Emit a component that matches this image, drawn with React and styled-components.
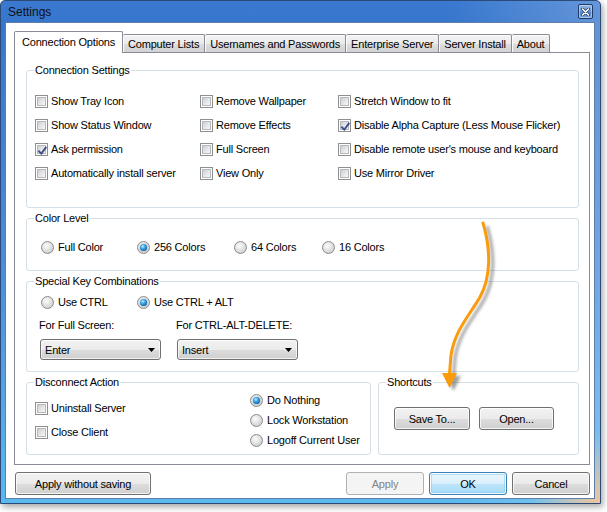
import React from 'react';
import styled, { createGlobalStyle, css } from 'styled-components';

const GlobalStyle = createGlobalStyle`
  html, body {
    margin: 0;
    padding: 0;
    background: #fff;
  }
  body {
    font-family: "Liberation Sans", Arial, sans-serif;
    font-size: 11px;
    letter-spacing: -0.2px;
    color: #000;
  }
`;

const Page = styled.div`
  position: relative;
  width: 607px;
  height: 512px;
  overflow: hidden;
`;

const Window = styled.div`
  box-sizing: border-box;
  width: 601px;
  height: 504px;
  display: flex;
  flex-direction: column;
  border: 1px solid #2b4a78;
  border-radius: 5px 5px 0 0;
  padding: 0 5px 4px 4px;
  background:
    radial-gradient(circle at 100% 100%, rgba(247, 196, 150, 0.95) 0, rgba(247, 196, 150, 0) 70px),
    linear-gradient(90deg, rgba(255, 255, 255, 0) 75%, rgba(255, 255, 255, 0.22) 100%),
    linear-gradient(180deg, #3a79cf 0, #3676cc 22px, #4a8fda 55%, #5ab9ee 100%);
  box-shadow: 2px 3px 6px rgba(0, 0, 0, 0.35);
`;

const TitleBar = styled.div`
  height: 21px;
  display: flex;
  align-items: center;
  justify-content: space-between;
  padding: 0 2px 0 3px;
`;

const Title = styled.span`
  font-size: 12px;
  letter-spacing: 0;
  color: #111;
`;

const CloseButton = styled.div`
  box-sizing: border-box;
  width: 15px;
  height: 15px;
  display: flex;
  align-items: center;
  justify-content: center;
  border: 1px solid #1d3a66;
  border-radius: 2px;
  background: linear-gradient(180deg, #93b6e4 0%, #6893d2 50%, #4f80c7 51%, #76a4de 100%);
  box-shadow: inset 0 0 0 1px rgba(255, 255, 255, 0.4);
`;

const Client = styled.div`
  box-sizing: border-box;
  width: 590px;
  flex: 1;
  display: flex;
  flex-direction: column;
  border: 1px solid #5f7fa9;
  background: #fff;
  padding: 8px 4px 3px 8px;
`;

const TabStrip = styled.div`
  height: 21px;
  display: flex;
  align-items: flex-end;
  position: relative;
  z-index: 1;
`;

const Tab = styled.div`
  box-sizing: border-box;
  display: flex;
  align-items: center;
  height: 18px;
  padding: 0 5px;
  border: 1px solid #898c95;
  border-bottom: none;
  border-left-width: 0;
  border-radius: 2px 2px 0 0;
  background: linear-gradient(180deg, #f3f3f3 0%, #ebebeb 50%, #dedede 51%, #d2d2d2 100%);
  box-shadow: inset 1px 1px 0 rgba(255, 255, 255, 0.85);
  white-space: nowrap;

  ${(p) =>
    p.$active &&
    css`
      height: 22px;
      margin-bottom: -1px;
      padding: 0 7px 2px;
      border-left-width: 1px;
      background: #fff;
      box-shadow: none;
    `}
`;

const TabPanel = styled.div`
  box-sizing: border-box;
  height: 413px;
  display: flex;
  flex-direction: column;
  gap: 4px;
  border: 1px solid #898c95;
  background: #fff;
  padding: 11px 10px 0 11px;
`;

const GroupBox = styled.fieldset`
  margin: 0;
  min-width: 0;
  border: 1px solid #d5dfe5;
  border-radius: 3px;
  padding: ${(p) => p.$pad || '0 7px'};
`;

const Legend = styled.legend`
  padding: 0 1px;
  line-height: 13px;
  font-size: 11px;
`;

const CheckGrid = styled.div`
  display: grid;
  grid-template-columns: 165px 138px 1fr;
  grid-auto-rows: 24px;
  padding-left: 1px;
`;

const Item = styled.label`
  display: flex;
  align-items: center;
  gap: ${(p) => (p.$radio ? '4px' : '3px')};
  height: ${(p) => (p.$h ? `${p.$h}px` : 'auto')};
  white-space: nowrap;
`;

const Box = styled.span`
  position: relative;
  box-sizing: border-box;
  flex: none;
  width: 13px;
  height: 13px;
  border: 1px solid #8e8f8f;
  background: #fff;

  &::before {
    content: '';
    position: absolute;
    inset: 1px;
    border: 1px solid #b6b9bd;
    background: linear-gradient(135deg, #cbced3 0%, #e6e7e9 55%, #f6f6f6 100%);
  }

  svg {
    position: absolute;
    left: 0;
    top: 0;
  }
`;

const Circle = styled.span`
  position: relative;
  box-sizing: border-box;
  flex: none;
  width: 13px;
  height: 13px;
  border-radius: 50%;
  border: 1px solid #8b8b8b;
  background: radial-gradient(circle at 40% 35%, #fdfdfd 0%, #e2e2e2 45%, #c4c4c4 100%);

  ${(p) =>
    p.$on &&
    css`
      &::after {
        content: '';
        position: absolute;
        left: 2px;
        top: 2px;
        width: 7px;
        height: 7px;
        border-radius: 50%;
        background: radial-gradient(circle at 40% 35%, #bfeaff 0%, #3ea7e6 35%, #0e5c9e 80%, #0a3f72 100%);
        box-shadow: 0 0 1px #2a6aa0;
      }
    `}
`;

const RadioRow = styled.div`
  display: grid;
  grid-template-columns: 96px 97px 88px 1fr;
  height: 20px;
  padding-left: 7px;
`;

const ComboGrid = styled.div`
  display: grid;
  grid-template-columns: 137px 137px;
  margin-top: 7px;
  padding-left: 5px;
`;

const ComboField = styled.div`
  display: flex;
  flex-direction: column;
  gap: 7px;
`;

const FieldLabel = styled.span`
  line-height: 13px;
`;

const Combo = styled.div`
  box-sizing: border-box;
  width: 121px;
  height: 21px;
  margin-left: 1px;
  display: flex;
  align-items: center;
  justify-content: space-between;
  padding: 0 5px 0 4px;
  border: 1px solid #707070;
  border-radius: 3px;
  background: linear-gradient(180deg, #f2f2f2 0%, #ebebeb 50%, #dddddd 51%, #cfcfcf 100%);
  box-shadow: inset 0 0 0 1px rgba(255, 255, 255, 0.7);
`;

const BottomGroups = styled.div`
  display: grid;
  grid-template-columns: 345px 1fr;
  gap: 7px;
`;

const DisconnectBody = styled.div`
  display: grid;
  grid-template-columns: 216px 1fr;
  padding-bottom: 4px;
`;

const Stack = styled.div`
  display: flex;
  flex-direction: column;
  padding-top: ${(p) => p.$top || 0}px;
  padding-left: ${(p) => p.$left || 0}px;
`;

const ShortcutBody = styled.div`
  display: flex;
  gap: 9px;
  padding: 18px 0 0 8px;
`;

const Button = styled.div`
  box-sizing: border-box;
  width: ${(p) => p.$w}px;
  height: 23px;
  display: flex;
  align-items: center;
  justify-content: center;
  border: 1px solid #707070;
  border-radius: 3px;
  background: linear-gradient(180deg, #f2f2f2 0%, #ebebeb 50%, #dddddd 51%, #cfcfcf 100%);
  box-shadow: inset 0 0 0 1px rgba(255, 255, 255, 0.75);
  white-space: nowrap;

  ${(p) =>
    p.$primary &&
    css`
      border-color: #3c7fb1;
      background: linear-gradient(180deg, #eaf6fd 0%, #d9f0fc 50%, #bee6fd 51%, #a7d9f5 100%);
      box-shadow: inset 0 0 0 1px rgba(255, 255, 255, 0.9), inset 0 0 0 2px rgba(120, 200, 240, 0.5);
    `}

  ${(p) =>
    p.$disabled &&
    css`
      border-color: #adb2b5;
      background: #f4f4f4;
      box-shadow: none;
      color: #838383;
    `}
`;

const ButtonBar = styled.div`
  display: flex;
  justify-content: space-between;
  margin-top: 7px;
  padding-left: 1px;
`;

const ButtonGroup = styled.div`
  display: flex;
  gap: 5px;
`;

const ArrowLayer = styled.svg`
  position: absolute;
  left: 0;
  top: 0;
  pointer-events: none;
`;

const Checkbox = ({ label, checked }) => (
  <Item $h={24}>
    <Box>
      {checked && (
        <svg width="13" height="13" viewBox="0 0 13 13">
          <path d="M3 6.3 L5.2 8.6 L9.6 2.6 L10.8 3.6 L5.4 10.8 L2 7.4 Z" fill="#3b4f8f" stroke="#26386e" strokeWidth="0.4" />
        </svg>
      )}
    </Box>
    {label}
  </Item>
);

const Radio = ({ label, on }) => (
  <Item $radio $h={20}>
    <Circle $on={on} />
    {label}
  </Item>
);

const Dropdown = ({ value }) => (
  <Combo>
    <span>{value}</span>
    <svg width="7" height="4" viewBox="0 0 7 4">
      <path d="M0 0 H7 L3.5 4 Z" fill="#000" />
    </svg>
  </Combo>
);

const tabs = ['Connection Options', 'Computer Lists', 'Usernames and Passwords', 'Enterprise Server', 'Server Install', 'About'];

const connectionRows = [
  ['Show Tray Icon', false],
  ['Remove Wallpaper', false],
  ['Stretch Window to fit', false],
  ['Show Status Window', false],
  ['Remove Effects', false],
  ['Disable Alpha Capture (Less Mouse Flicker)', true],
  ['Ask permission', true],
  ['Full Screen', false],
  ["Disable remote user's mouse and keyboard", false],
  ['Automatically install server', false],
  ['View Only', false],
  ['Use Mirror Driver', false],
];

const App = () => (
  <Page>
    <GlobalStyle />
    <Window>
      <TitleBar>
        <Title>Settings</Title>
        <CloseButton>
          <svg width="9" height="8" viewBox="0 0 9 8">
            <path d="M1.5 1 L7.5 7 M7.5 1 L1.5 7" stroke="#233c63" strokeWidth="3" strokeLinecap="round" />
            <path d="M1.5 1 L7.5 7 M7.5 1 L1.5 7" stroke="#fff" strokeWidth="1.6" strokeLinecap="round" />
          </svg>
        </CloseButton>
      </TitleBar>
      <Client>
        <TabStrip>
          {tabs.map((t, i) => (
            <Tab key={t} $active={i === 0}>
              {t}
            </Tab>
          ))}
        </TabStrip>
        <TabPanel>
          <GroupBox $pad="12px 7px 22px">
            <Legend>Connection Settings</Legend>
            <CheckGrid>
              {connectionRows.map(([label, checked]) => (
                <Checkbox key={label} label={label} checked={checked} />
              ))}
            </CheckGrid>
          </GroupBox>

          <GroupBox $pad="12px 7px 13px">
            <Legend>Color Level</Legend>
            <RadioRow>
              <Radio label="Full Color" />
              <Radio label="256 Colors" on />
              <Radio label="64 Colors" />
              <Radio label="16 Colors" />
            </RadioRow>
          </GroupBox>

          <GroupBox $pad="4px 7px 11px">
            <Legend>Special Key Combinations</Legend>
            <RadioRow>
              <Radio label="Use CTRL" />
              <Radio label="Use CTRL + ALT" on />
            </RadioRow>
            <ComboGrid>
              <ComboField>
                <FieldLabel>For Full Screen:</FieldLabel>
                <Dropdown value="Enter" />
              </ComboField>
              <ComboField>
                <FieldLabel>For CTRL-ALT-DELETE:</FieldLabel>
                <Dropdown value="Insert" />
              </ComboField>
            </ComboGrid>
          </GroupBox>

          <BottomGroups>
            <GroupBox $pad="1px 7px 0">
              <Legend>Disconnect Action</Legend>
              <DisconnectBody>
                <Stack $top={6} $left={1}>
                  <Checkbox label="Uninstall Server" />
                  <Checkbox label="Close Client" />
                </Stack>
                <Stack>
                  <Radio label="Do Nothing" on />
                  <Radio label="Lock Workstation" />
                  <Radio label="Logoff Current User" />
                </Stack>
              </DisconnectBody>
            </GroupBox>
            <GroupBox $pad="0 7px">
              <Legend>Shortcuts</Legend>
              <ShortcutBody>
                <Button $w={76}>Save To...</Button>
                <Button $w={75}>Open...</Button>
              </ShortcutBody>
            </GroupBox>
          </BottomGroups>
        </TabPanel>

        <ButtonBar>
          <Button $w={136}>Apply without saving</Button>
          <ButtonGroup>
            <Button $w={78} $disabled>
              Apply
            </Button>
            <Button $w={78} $primary>
              OK
            </Button>
            <Button $w={78}>Cancel</Button>
          </ButtonGroup>
        </ButtonBar>
      </Client>
    </Window>

    <ArrowLayer width="607" height="512" viewBox="0 0 607 512">
      <defs>
        <filter id="arrowShadow" x="-50%" y="-20%" width="200%" height="140%">
          <feGaussianBlur stdDeviation="1.6" />
        </filter>
      </defs>
      <g transform="translate(4 3)" opacity="0.45" filter="url(#arrowShadow)" fill="#333" stroke="#333">
        <path d="M483 223 C491 250 491 277 480 297 C469 316 455 330 451 355 L449.5 374" fill="none" strokeWidth="3" />
        <path d="M442 373 L457 373 L449.5 388 Z" stroke="none" />
      </g>
      <path d="M483 223 C491 250 491 277 480 297 C469 316 455 330 451 355 L449.5 374" fill="none" stroke="#f99b0c" strokeWidth="3" strokeLinecap="round" />
      <path d="M442 373 L457 373 L449.5 388 Z" fill="#f99b0c" />
    </ArrowLayer>
  </Page>
);

export default App;
